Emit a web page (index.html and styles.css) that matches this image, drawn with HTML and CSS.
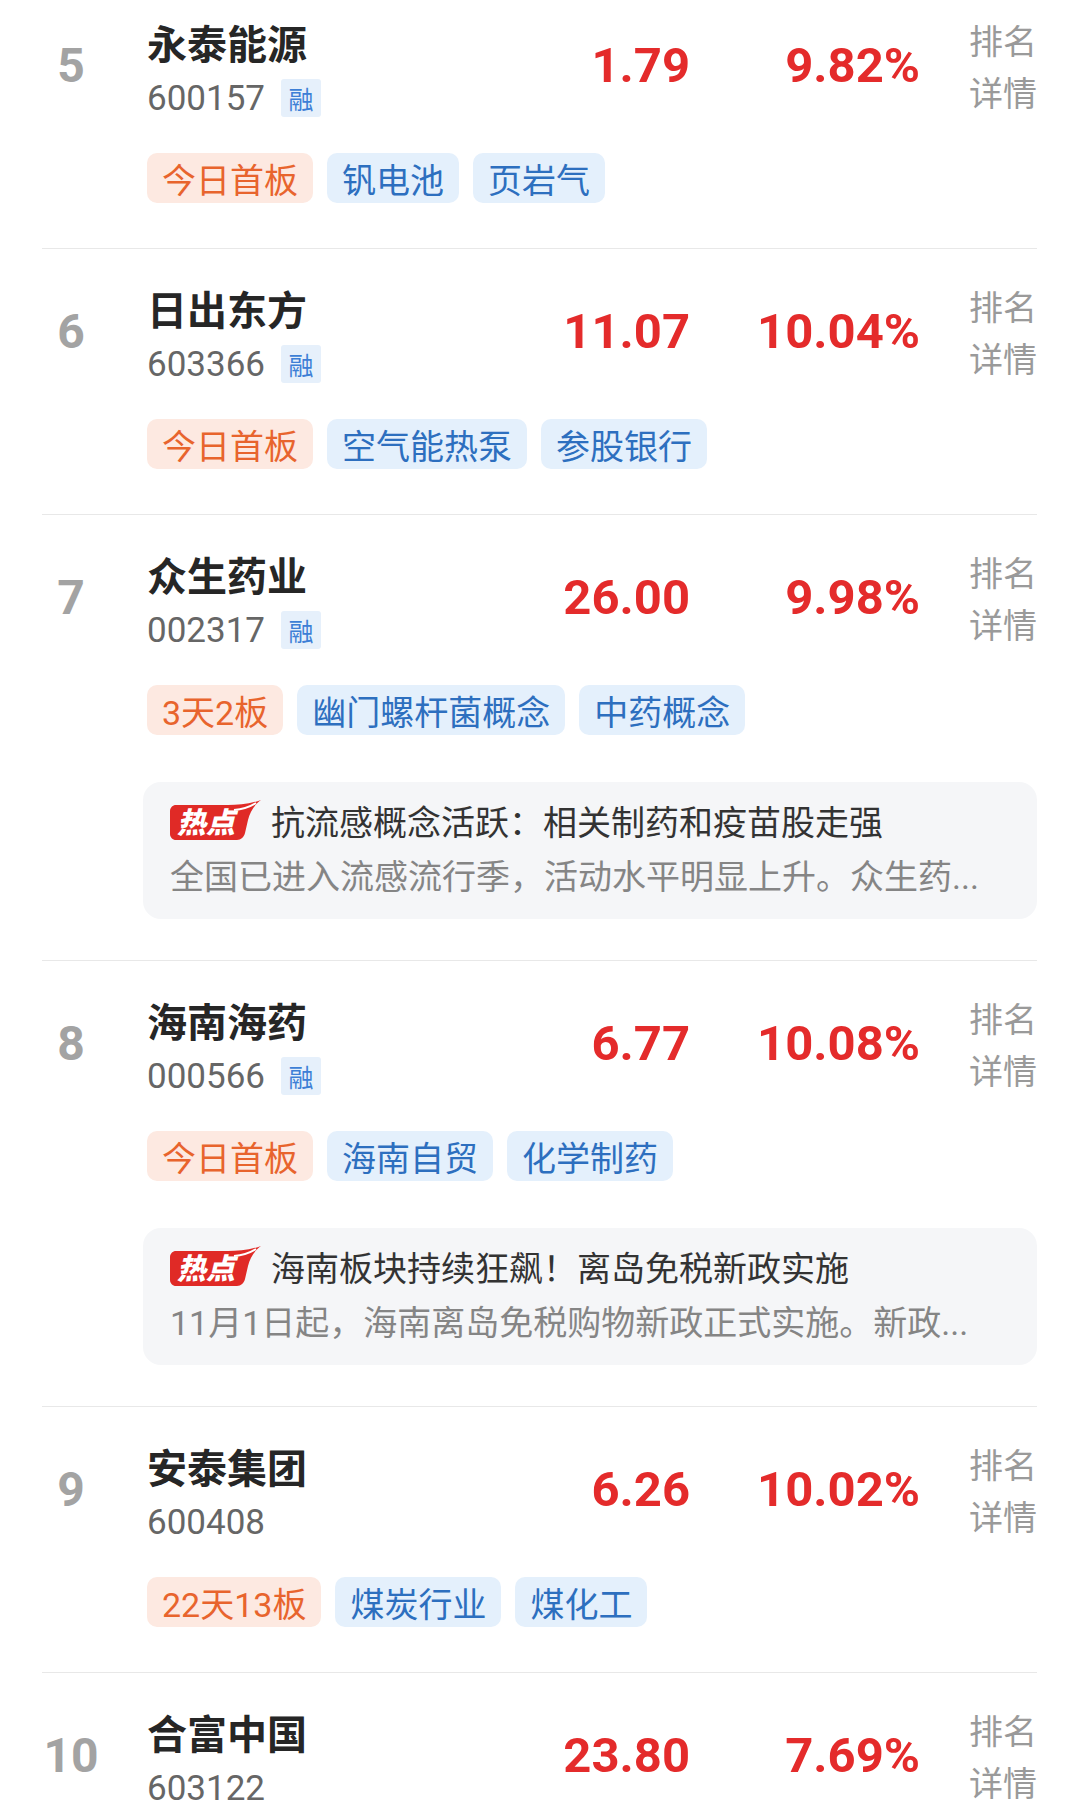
FILE: index.html
```html
<!DOCTYPE html>
<html lang="zh-CN">
<head>
    <meta charset="UTF-8">
    <meta name="viewport" content="width=device-width, initial-scale=1.0">
    <title>涨停排行</title>
    <link rel="stylesheet" href="styles.css">
</head>
<body>
    <div class="list">
        <div class="row">
            <div class="main">
                <div class="rank">5</div>
                <div class="info">
                    <div class="name">永泰能源</div>
                    <div class="code">600157<span class="rong">融</span></div>
                </div>
                <div class="price">1.79</div>
                <div class="pct">9.82%</div>
                <div class="more">排名<br>详情</div>
            </div>
            <div class="tags">
                <span class="tag board">今日首板</span>
                <span class="tag">钒电池</span>
                <span class="tag">页岩气</span>
            </div>
        </div>

        <div class="row">
            <div class="main">
                <div class="rank">6</div>
                <div class="info">
                    <div class="name">日出东方</div>
                    <div class="code">603366<span class="rong">融</span></div>
                </div>
                <div class="price">11.07</div>
                <div class="pct">10.04%</div>
                <div class="more">排名<br>详情</div>
            </div>
            <div class="tags">
                <span class="tag board">今日首板</span>
                <span class="tag">空气能热泵</span>
                <span class="tag">参股银行</span>
            </div>
        </div>

        <div class="row with-news">
            <div class="main">
                <div class="rank">7</div>
                <div class="info">
                    <div class="name">众生药业</div>
                    <div class="code">002317<span class="rong">融</span></div>
                </div>
                <div class="price">26.00</div>
                <div class="pct">9.98%</div>
                <div class="more">排名<br>详情</div>
            </div>
            <div class="tags">
                <span class="tag board">3天2板</span>
                <span class="tag">幽门螺杆菌概念</span>
                <span class="tag">中药概念</span>
            </div>
            <div class="news">
                <div class="news-title">
                    <svg class="hot" width="91" height="40" viewBox="0 0 91 40">
                        <path d="M6,5 H58 C68,5 80,4 91,0 C84,5 80,12 78,20 L75,33 C74,37 71,40 67,40 H6 C2.7,40 0,37.3 0,34 V11 C0,7.7 2.7,5 6,5 Z" fill="#e02a26"/>
                        <path d="M64,10 Q76,9 86,3" stroke="#fff" stroke-width="2" fill="none"/>
                        <text x="7" y="33" class="hot-text">热点</text>
                    </svg>
                    <span>抗流感概念活跃：相关制药和疫苗股走强</span>
                </div>
                <div class="news-desc">全国已进入流感流行季，活动水平明显上升。众生药...</div>
            </div>
        </div>

        <div class="row with-news">
            <div class="main">
                <div class="rank">8</div>
                <div class="info">
                    <div class="name">海南海药</div>
                    <div class="code">000566<span class="rong">融</span></div>
                </div>
                <div class="price">6.77</div>
                <div class="pct">10.08%</div>
                <div class="more">排名<br>详情</div>
            </div>
            <div class="tags">
                <span class="tag board">今日首板</span>
                <span class="tag">海南自贸</span>
                <span class="tag">化学制药</span>
            </div>
            <div class="news">
                <div class="news-title">
                    <svg class="hot" width="91" height="40" viewBox="0 0 91 40">
                        <path d="M6,5 H58 C68,5 80,4 91,0 C84,5 80,12 78,20 L75,33 C74,37 71,40 67,40 H6 C2.7,40 0,37.3 0,34 V11 C0,7.7 2.7,5 6,5 Z" fill="#e02a26"/>
                        <path d="M64,10 Q76,9 86,3" stroke="#fff" stroke-width="2" fill="none"/>
                        <text x="7" y="33" class="hot-text">热点</text>
                    </svg>
                    <span>海南板块持续狂飙！离岛免税新政实施</span>
                </div>
                <div class="news-desc">11月1日起，海南离岛免税购物新政正式实施。新政...</div>
            </div>
        </div>

        <div class="row">
            <div class="main">
                <div class="rank">9</div>
                <div class="info">
                    <div class="name">安泰集团</div>
                    <div class="code">600408</div>
                </div>
                <div class="price">6.26</div>
                <div class="pct">10.02%</div>
                <div class="more">排名<br>详情</div>
            </div>
            <div class="tags">
                <span class="tag board">22天13板</span>
                <span class="tag">煤炭行业</span>
                <span class="tag">煤化工</span>
            </div>
        </div>

        <div class="row">
            <div class="main">
                <div class="rank">10</div>
                <div class="info">
                    <div class="name">合富中国</div>
                    <div class="code">603122</div>
                </div>
                <div class="price">23.80</div>
                <div class="pct">7.69%</div>
                <div class="more">排名<br>详情</div>
            </div>
        </div>
    </div>
</body>
</html>
```

FILE: styles.css
```css
html {
    overflow: hidden;
}

body {
    margin: 0;
    background-color: #fff;
    font-family: Roboto, "Noto Sans CJK SC", sans-serif;
    color: #333;
}

.list {
    margin-top: -17px; /* list is scrolled, row 5 is cut at the top */
}

.row {
    margin: 0 42px;
    padding: 22px 0 45px;
    border-bottom: 1px solid #e8e8e8;
}

.row.with-news {
    padding-bottom: 41px;
}

.main {
    display: flex;
    align-items: center;
}

.rank {
    width: 58px;
    text-align: center;
    font-size: 48px;
    font-weight: bold;
    line-height: 56px;
    color: #a3a3a3;
}

.info {
    flex: 1;
    margin-left: 47px;
    padding-top: 10px; /* name/code block sits lower than the numbers */
}

.name {
    font-family: "Noto Sans CJK SC", sans-serif;
    font-size: 40px;
    font-weight: bold;
    line-height: 54px;
    color: #262626;
}

.code {
    display: flex;
    align-items: center;
    height: 58px;
    font-size: 35px;
    color: #666;
}

.rong {
    display: inline-flex;
    align-items: center;
    justify-content: center;
    width: 40px;
    height: 38px;
    margin-left: 16px;
    border-radius: 3px;
    background-color: #e6f0fb;
    color: #3d7fd6;
    font-size: 25px;
    font-family: "Noto Sans CJK SC", sans-serif;
}

.price,
.pct {
    font-size: 49px;
    font-weight: bold;
    line-height: 60px;
    color: #e42b2b;
    text-align: right;
}

.price {
    width: 202px;
}

.pct {
    width: 230px;
}

.more {
    width: 68px;
    margin-left: 49px;
    font-size: 34px;
    line-height: 52px;
    color: #9a9a9a;
    font-family: "Noto Sans CJK SC", sans-serif;
}

.tags {
    display: flex;
    gap: 14px;
    margin: 26px 0 0 105px;
}

.tag {
    display: inline-flex;
    align-items: center;
    height: 50px;
    padding: 0 15px;
    border-radius: 10px;
    background-color: #e4f0fc;
    color: #2d6fbf;
    font-size: 34px;
}

.tag.board {
    background-color: #fde9e1;
    color: #e8642d;
}

.news {
    margin: 47px 0 0 101px;
    padding: 11px 27px 12px;
    border-radius: 18px;
    background-color: #f5f6f8;
}

.news-title {
    display: flex;
    align-items: center;
    gap: 10px;
    height: 54px;
    font-size: 34px;
    color: #333;
}

.hot {
    flex: none;
}

.hot-text {
    fill: #fff;
    font-family: "Noto Sans CJK SC", sans-serif;
    font-size: 29px;
    font-weight: 900;
    font-style: italic;
}

.news-desc {
    height: 60px;
    line-height: 60px;
    font-size: 34px;
    color: #858585;
    white-space: nowrap;
    overflow: hidden;
}
```
